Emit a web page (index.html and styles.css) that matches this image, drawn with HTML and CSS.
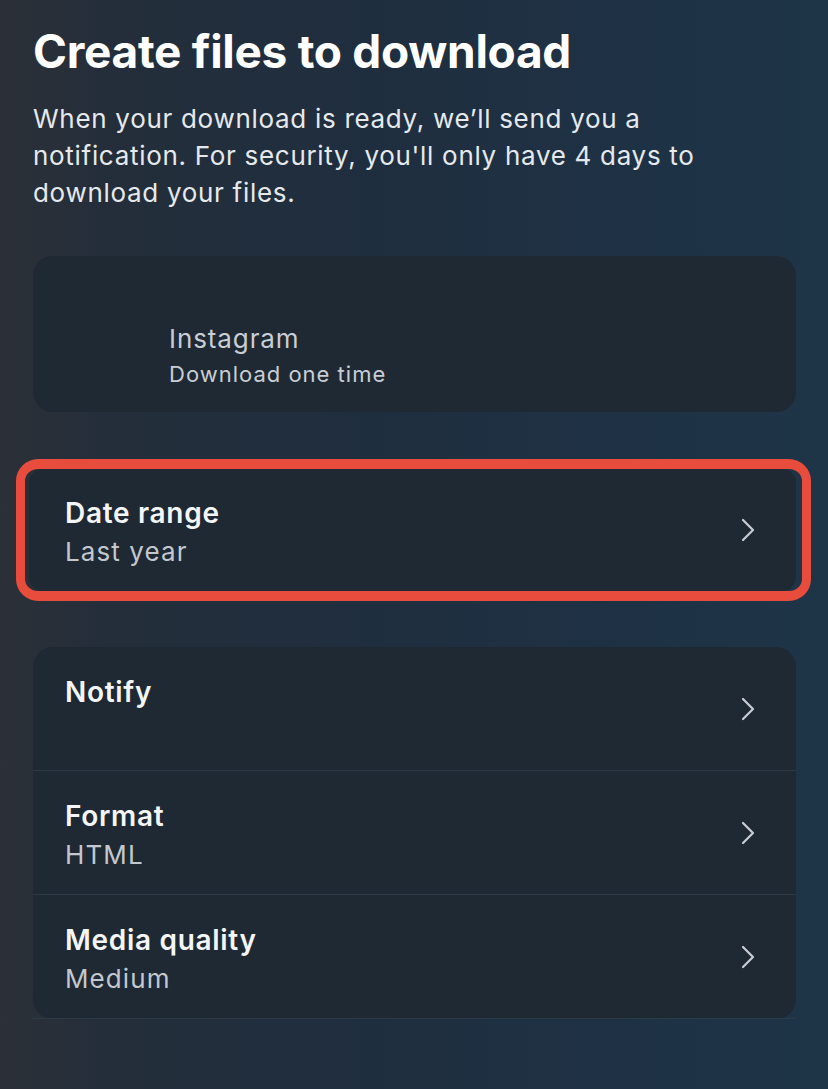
FILE: index.html
```html
<!DOCTYPE html>
<html lang="en">
<head>
<meta charset="utf-8">
<title>Create files to download</title>
<link rel="stylesheet" href="styles.css">
</head>
<body>
<main class="page">
  <h1 class="title">Create files to download</h1>
  <p class="intro">When your download is ready, we’ll send you a notification. For security, you'll only have 4 days to download your files.</p>

  <section class="card account">
    <div class="account-text">
      <div class="account-name">Instagram</div>
      <div class="account-sub">Download one time</div>
    </div>
  </section>

  <div class="highlight">
    <section class="card">
      <div class="row">
        <div class="row-text">
          <div class="row-title">Date range</div>
          <div class="row-sub">Last year</div>
        </div>
        <svg class="chev" viewBox="0 0 14 24" aria-hidden="true"><path d="M2 2 L12 12 L2 22"/></svg>
      </div>
    </section>
  </div>

  <section class="card list">
    <div class="row row-line">
      <div class="row-text">
        <div class="row-title">Notify</div>
        <div class="row-sub">&nbsp;</div>
      </div>
      <svg class="chev" viewBox="0 0 14 24" aria-hidden="true"><path d="M2 2 L12 12 L2 22"/></svg>
    </div>
    <div class="row row-line">
      <div class="row-text">
        <div class="row-title">Format</div>
        <div class="row-sub">HTML</div>
      </div>
      <svg class="chev" viewBox="0 0 14 24" aria-hidden="true"><path d="M2 2 L12 12 L2 22"/></svg>
    </div>
    <div class="row row-line">
      <div class="row-text">
        <div class="row-title">Media quality</div>
        <div class="row-sub">Medium</div>
      </div>
      <svg class="chev" viewBox="0 0 14 24" aria-hidden="true"><path d="M2 2 L12 12 L2 22"/></svg>
    </div>
  </section>
</main>
</body>
</html>
```

FILE: styles.css
```css
html, body {
  margin: 0;
  padding: 0;
  height: 100%;
}
body {
  background: linear-gradient(90deg, #2c3037 0%, #242e3a 12%, #1f2e3f 45%, #1e3245 80%, #1e3447 100%);
  font-family: Inter, "Noto Sans", sans-serif;
  color: #e9ebee;
  min-height: 1089px;
}
.page {
  padding: 23px 32px 0 33px;
  display: flex;
  flex-direction: column;
}
.title {
  margin: 0;
  font-size: 46px;
  line-height: 56px;
  font-weight: 700;
  color: #ffffff;
  letter-spacing: -0.3px;
}
.intro {
  margin: 21px 0 0;
  font-size: 26px;
  line-height: 37px;
  font-weight: 400;
  color: #e6e9ec;
  letter-spacing: 0.7px;
  max-width: 700px;
}
.card {
  background: #1e2934;
  border-radius: 20px;
}
.account {
  margin-top: 45px;
  height: 156px;
  display: flex;
  align-items: flex-end;
  padding: 0 0 20px 136px;
  box-sizing: border-box;
}
.account-name {
  font-size: 26px;
  line-height: 36px;
  letter-spacing: 0.9px;
  color: #c9ced4;
}
.account-sub {
  font-size: 22px;
  line-height: 35px;
  letter-spacing: 1px;
  color: #c9ced4;
}
.highlight {
  margin: 47px -15px 0 -17px;
  border: 10px solid #e84c3d;
  border-left-width: 9px;
  border-right-width: 9px;
  border-radius: 22px;
  padding: 0 6px 0 4px;
}
.highlight .card {
  border-radius: 14px;
}
.row {
  display: flex;
  align-items: center;
  justify-content: space-between;
  padding: 0 41px 0 32px;
  height: 122px;
  box-sizing: border-box;
}
.highlight .row {
  padding-left: 36px;
  padding-right: 41px;
}
.row-text {
  display: flex;
  flex-direction: column;
  padding-top: 6px;
}
.row-title {
  font-size: 28px;
  line-height: 38px;
  font-weight: 600;
  letter-spacing: 0.7px;
  color: #f4f5f7;
}
.row-sub {
  font-size: 26px;
  line-height: 40px;
  letter-spacing: 1.1px;
  color: #c3c8ce;
}
.chev {
  width: 14px;
  height: 24px;
  fill: none;
  stroke: #c9ced4;
  stroke-width: 2.2;
  stroke-linecap: round;
  stroke-linejoin: round;
}
.list {
  margin-top: 46px;
}
.list .row {
  height: 124px;
}
.row-line {
  border-bottom: 1px solid #2d3944;
}
```
